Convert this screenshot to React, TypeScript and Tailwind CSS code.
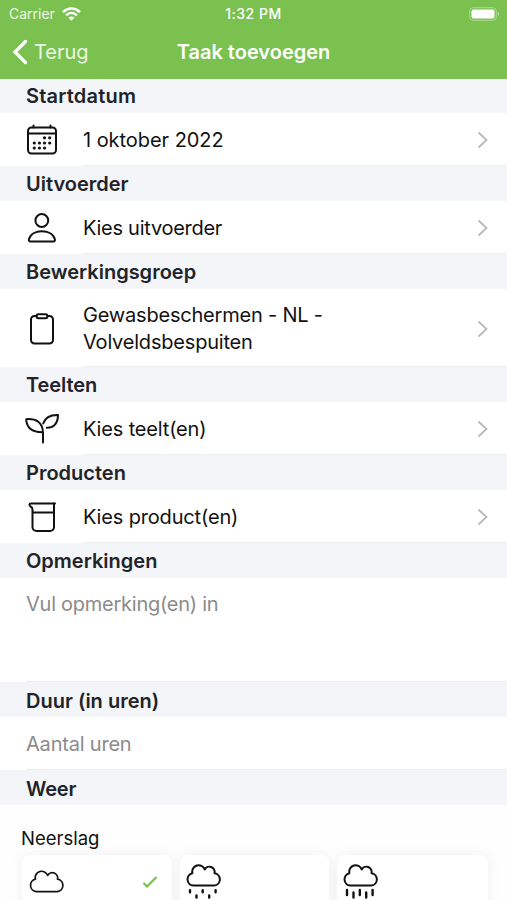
import type { ReactNode } from "react";

function Icon({ children }: { children: ReactNode }) {
  return (
    <svg
      width="36"
      height="36"
      viewBox="0 0 36 36"
      fill="none"
      stroke="#111"
      strokeWidth="2"
      strokeLinecap="round"
      strokeLinejoin="round"
      className="shrink-0"
    >
      {children}
    </svg>
  );
}

const dots = [
  [20.5, 14], [25.7, 14],
  [10.3, 19.2], [15.4, 19.2], [20.5, 19.2], [25.7, 19.2],
  [10.3, 24.2], [15.4, 24.2], [20.5, 24.2],
];

const CalendarIcon = () => (
  <Icon>
    <rect x="4" y="5.500" width="28" height="26" rx="3.500" />
    <path d="M4.5 11.500h27M9.500 3.500v2M26.500 3.500v2" />
    {dots.map(([x, y]) => (
      <circle key={`${x}-${y}`} cx={x} cy={y + 1.8} r="1.6" fill="#111" stroke="none" />
    ))}
  </Icon>
);

const PersonIcon = () => (
  <Icon>
    <circle cx="17.8" cy="10.500" r="6.400" />
    <path d="M6.6 31.500h22.6c1.4 0 2-1 1.7-2.200C29.500 24 24 21.200 17.900 21.200S6.300 24 4.900 29.300c-.3 1.200.3 2.200 1.700 2.200z" />
  </Icon>
);

const ClipboardIcon = () => (
  <Icon>
    <path d="M12.500 6H10.500A3.500 3.500 0 0 0 7 9.500V30A3.500 3.500 0 0 0 10.500 33.500H25.500A3.500 3.500 0 0 0 29 30V9.500A3.500 3.500 0 0 0 25.500 6H23.500" />
    <rect x="12.500" y="4.200" width="11" height="4" rx="2" />
  </Icon>
);

const SproutIcon = () => (
  <Icon>
    <path d="M19 31.500V22.500C19 11 12 7.500 2.200 8.200C2.600 16 7.500 21.400 19 21.200" />
    <path d="M19.200 12.500C21.500 5.500 27 3.800 34 4C34 13 29 17 22.800 16.800" />
  </Icon>
);

const BeakerIcon = () => (
  <Icon>
    <path d="M8.500 10.500V28A4 4 0 0 0 12.500 32H26A4 4 0 0 0 30 28V4.500H7C5 4.500 5 6.500 6.500 7.500C8 8.200 8.500 9 8.500 10.500zM8.500 13.500H30" />
    <path d="M30 4.500H31" />
  </Icon>
);

const Chevron = () => (
  <svg width="12" height="18" viewBox="0 0 12 18" fill="none" stroke="#b9b9bd" strokeWidth="1.800" className="shrink-0">
    <path d="M1.500 1.500L9.500 9L1.500 16.500" />
  </svg>
);

function Heading({ text, spacing, size = "h-[35px] pt-px" }: { text: string; spacing: string; size?: string }) {
  return (
    <h2 className={`flex shrink-0 items-center bg-[#f3f5f9] pl-[26px] text-[20px] font-semibold leading-[27px] text-[#222327] ${size} ${spacing}`}>
      {text}
    </h2>
  );
}

function Row({ icon, spacing, tall, children }: { icon: ReactNode; spacing: string; tall?: boolean; children: ReactNode }) {
  return (
    <div className={`flex shrink-0 items-center bg-white pl-6 ${tall ? "h-[78px]" : "h-[53px]"}`}>
      {icon}
      <div className={`ml-[23px] flex h-full flex-1 items-center justify-between border-b border-[#eeeff2] pr-[18px] pt-0.5 text-[20px] leading-[27px] text-[#111] ${spacing}`}>
        <span className="whitespace-nowrap">{children}</span>
        <Chevron />
      </div>
    </div>
  );
}

function Cloud({ rain }: { rain?: "light" | "heavy" }) {
  return (
    <svg width="38" height="36" viewBox="0 0 38 36" fill="none" stroke="#111" strokeWidth={rain ? 2 : 1.700} strokeLinecap="round" strokeLinejoin="round" className="shrink-0">
      <path d="M8.200 21.600H29.300A6.250 6.250 0 0 0 29.500 9.200A5.300 5.300 0 0 0 19.700 5.400A6.450 6.450 0 0 0 7.400 9.200A6.300 6.300 0 0 0 8.200 21.600z" />
      {rain === "light" && <path strokeWidth="2.400" d="M5 26.200v2M17.700 26.200v2M30.600 26.200v2M11.500 31.500v2M24.200 31.500v2" />}
      {rain === "heavy" && <path strokeWidth="2.400" d="M5 26v5M17.800 26v5M30.600 26v5M11.500 28.500v5M24.200 28.500v5" />}
    </svg>
  );
}

export default function App() {
  return (
    <div className="flex h-[900px] w-[507px] flex-col overflow-hidden bg-white font-['Inter','Liberation_Sans',sans-serif]">
      <header className="h-[79px] shrink-0 bg-[#7ac150] text-white">
        <div className="grid h-[27px] grid-cols-3 items-center px-[9px]">
          <div className="flex items-center gap-[7px]">
            <span className="text-[14px] tracking-[0px] text-white/85">Carrier</span>
            <svg width="19" height="14" viewBox="0 0 19 14" fill="none" stroke="white" strokeWidth="2.500">
              <path d="M1 5.200C6 .4 13 .4 18 5.200M4.100 8.300C7.300 5.300 11.700 5.300 14.900 8.300" />
              <path d="M9.500 13.700L6.500 10.700C8.200 9.200 10.800 9.200 12.500 10.700z" fill="white" stroke="none" />
            </svg>
          </div>
          <span className="text-center text-[14px] font-medium tracking-[0.5px]">1:32 PM</span>
          <svg width="31" height="14" viewBox="0 0 31 14" className="-mr-0.5 justify-self-end">
            <rect x=".7" y=".7" width="26.600" height="12.600" rx="3.500" fill="none" stroke="white" strokeOpacity=".4" />
            <rect x="2.500" y="2.500" width="23" height="9" rx="2" fill="white" />
            <path d="M28.700 5v4c1-.4 1.500-1 1.500-2s-.5-1.600-1.500-2z" fill="white" fillOpacity=".4" />
          </svg>
        </div>
        <div className="grid h-[52px] grid-cols-3 items-center pb-0.5">
          <div className="flex items-center pl-3 text-[20px]">
            <svg width="17" height="26" viewBox="0 0 17 26" fill="none" stroke="white" strokeWidth="3.300" strokeLinecap="round">
              <path d="M13.500 2.500L3 13L13.500 23.500" />
            </svg>
            <span className="ml-[5px] text-white/85">Terug</span>
          </div>
          <h1 className="whitespace-nowrap text-center text-[20px] font-semibold">Taak toevoegen</h1>
        </div>
      </header>

      <Heading text="Startdatum" spacing="tracking-[0.2px]" size="h-[34px] pt-px" />
      <Row icon={<CalendarIcon />} spacing="tracking-[-0.05px]">1 oktober 2022</Row>
      <Heading text="Uitvoerder" spacing="tracking-[0px]" />
      <Row icon={<PersonIcon />} spacing="tracking-[-0.27px]">Kies uitvoerder</Row>
      <Heading text="Bewerkingsgroep" spacing="tracking-[0px]" />
      <Row tall icon={<ClipboardIcon />} spacing="tracking-[-0.2px]">
        Gewasbeschermen - NL -<br />Volveldsbespuiten
      </Row>
      <Heading text="Teelten" spacing="tracking-[-0.1px]" />
      <Row icon={<SproutIcon />} spacing="tracking-[-0.16px]">Kies teelt(en)</Row>
      <Heading text="Producten" spacing="tracking-[0px]" />
      <Row icon={<BeakerIcon />} spacing="tracking-[-0.16px]">Kies product(en)</Row>
      <Heading text="Opmerkingen" spacing="tracking-[0px]" />
      <div className="h-[104px] shrink-0 pl-[26px]">
        <div className="h-full border-b border-[#eeeff2] pt-[13px] text-[20px] leading-[27px] tracking-[-0.25px] text-[#8b8b8b]">Vul opmerking(en) in</div>
      </div>
      <Heading text="Duur (in uren)" spacing="tracking-[0px]" size="h-[35px] pt-[3px]" />
      <div className="h-[53px] shrink-0 pl-[26px]">
        <div className="flex h-full items-center border-b border-[#eeeff2] pt-[3px] text-[20px] leading-[27px] tracking-[-0.2px] text-[#8b8b8b]">Aantal uren</div>
      </div>
      <Heading text="Weer" spacing="tracking-[-0.2px]" size="h-[35px] pt-[3px]" />

      <section className="shrink-0 bg-[#fefefe] pt-5">
        <h3 className="pl-[21px] text-[18.500px] leading-[26px] text-[#111]">Neerslag</h3>
        <div className="mt-1 flex gap-2 pl-[22px]">
          <div className="flex h-[90px] w-[150px] shrink-0 items-start justify-between rounded-lg bg-white pl-1.5 pr-3.5 pt-[15px] shadow-[0_0_14px_rgba(0,0,0,0.06)]">
            <Cloud />
            <svg width="16" height="14" viewBox="0 0 16 14" fill="none" stroke="#77c14c" strokeWidth="2.200" className="mt-[5px]">
              <path d="M1.500 8L5 11.500L14.500 2" />
            </svg>
          </div>
          <div className="h-[90px] w-[149px] shrink-0 rounded-lg bg-white pl-[5px] pt-[9px] shadow-[0_0_14px_rgba(0,0,0,0.06)]">
            <Cloud rain="light" />
          </div>
          <div className="h-[90px] w-[151px] shrink-0 rounded-lg bg-white pl-[5px] pt-[9px] shadow-[0_0_14px_rgba(0,0,0,0.06)]">
            <Cloud rain="heavy" />
          </div>
        </div>
      </section>
    </div>
  );
}
